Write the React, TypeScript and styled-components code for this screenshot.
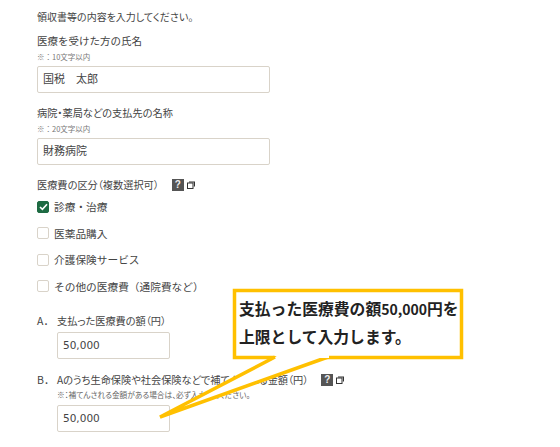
import React from "react";
import styled, { createGlobalStyle } from "styled-components";

const Global = createGlobalStyle`
  html, body { margin: 0; padding: 0; background: #fff; }
  body { font-family: "Noto Sans CJK JP", "Noto Sans", sans-serif; color: #444; overflow: hidden; }
`;

const Page = styled.div`
  position: relative;
  width: 560px;
  height: 447px;
  overflow: hidden;
  box-sizing: border-box;
  padding: 9px 0 0 37px;
`;

const Lead = styled.p`
  margin: 0 0 8px;
  font-size: 10px;
  line-height: 16px;
  font-feature-settings: "palt";
`;

const Field = styled.div`
  margin-bottom: 12px;
`;

const Label = styled.div`
  font-size: 10.2px;
  line-height: 16px;
  display: flex;
  align-items: center;
  font-feature-settings: "palt";
`;

const FieldLabel = styled(Label)<{ $plain?: boolean }>`
  font-size: ${(p) => (p.$plain ? 10.5 : 10.2)}px;
  font-feature-settings: ${(p) => (p.$plain ? "normal" : '"palt"')};
`;

const Note = styled.div`
  font-size: 7.5px;
  line-height: 12px;
  color: #777;
  margin: 2px 0 3px;
`;

const TextInput = styled.div<{ $wide?: boolean }>`
  box-sizing: border-box;
  width: ${(p) => (p.$wide ? 233 : 113)}px;
  height: 27px;
  border: 1px solid #d9d3c9;
  border-radius: 2px;
  padding: 0 5px;
  font-family: "DejaVu Sans", "Noto Sans CJK JP", sans-serif;
  font-size: ${(p) => (p.$wide ? 11 : 10.5)}px;
  line-height: 25px;
  color: #444;
  background: #fff;
`;

const Help = styled.span`
  display: inline-flex;
  align-items: center;
  gap: 3px;
  margin-left: 13px;
`;

const HelpBox = styled.span`
  width: 12px;
  height: 12px;
  background: #555;
  color: #eee;
  font: bold 10px/12px "Liberation Sans", sans-serif;
  text-align: center;
`;

const CheckList = styled.div`
  margin-top: 5px;
  margin-bottom: 18px;
  display: flex;
  flex-direction: column;
  gap: 9.5px;
`;

const CheckRow = styled.div`
  display: flex;
  align-items: center;
  gap: 5px;
  font-size: 10.7px;
  line-height: 17px;
`;

const Box = styled.span<{ $on?: boolean }>`
  box-sizing: border-box;
  width: 12px;
  height: 12px;
  border-radius: 2px;
  border: 1px solid ${(p) => (p.$on ? "#1e6b43" : "#d9d3c9")};
  background: ${(p) => (p.$on ? "#1e6b43" : "#fff")};
  display: flex;
  align-items: center;
  justify-content: center;
`;

const Amount = styled.div`
  display: grid;
  grid-template-columns: 20px 1fr;
  margin-bottom: 13px;
`;

const Mark = styled.span`
  font-size: 10.5px;
  line-height: 16px;
`;

const AmountBody = styled.div``;

const AmountLabel = styled(Label)`
  margin-bottom: 3px;
`;

const AmountNote = styled(Note)`
  color: #666;
  font-size: 7.7px;
  margin: 1px 0 4px;
  font-feature-settings: "palt";
`;

const Callout = styled.div`
  position: absolute;
  left: 233px;
  top: 289px;
  width: 229px;
  height: 69px;
  box-sizing: border-box;
  padding: 6px 0 0 6px;
  font-size: 15.8px;
  font-weight: 700;
  line-height: 27px;
  color: #222;
  white-space: nowrap;
`;

const CalloutText = styled.div`
  position: relative;
`;

const Digits = styled.span`
  font-size: 14px;
`;

const Tail = styled.svg`
  position: absolute;
  left: -80px;
  top: 0;
  overflow: visible;
`;

const HelpIcon = () => (
  <Help>
    <HelpBox>?</HelpBox>
    <svg width="8" height="8" viewBox="0 0 8 8" fill="none" stroke="#333">
      <rect x="0.5" y="2" width="5.5" height="5.5" strokeWidth="1" />
      <path d="M2 1h5.5v4.5" strokeWidth="1.2" />
    </svg>
  </Help>
);

export default function App() {
  return (
    <Page>
      <Global />
      <Lead>領収書等の内容を入力してください。</Lead>
      <Field>
        <FieldLabel $plain>医療を受けた方の氏名</FieldLabel>
        <Note>※：10文字以内</Note>
        <TextInput $wide>国税　太郎</TextInput>
      </Field>
      <Field>
        <FieldLabel>病院・薬局などの支払先の名称</FieldLabel>
        <Note>※：20文字以内</Note>
        <TextInput $wide>財務病院</TextInput>
      </Field>
      <Label>
        医療費の区分（複数選択可）
        <HelpIcon />
      </Label>
      <CheckList>
        <CheckRow>
          <Box $on>
            <svg width="9" height="8" viewBox="0 0 9 8" fill="none">
              <path d="M1 4l2.4 2.4L8 1.2" stroke="#fff" strokeWidth="1.6" />
            </svg>
          </Box>
          診療・治療
        </CheckRow>
        <CheckRow>
          <Box />
          医薬品購入
        </CheckRow>
        <CheckRow>
          <Box />
          介護保険サービス
        </CheckRow>
        <CheckRow>
          <Box />
          その他の医療費（通院費など）
        </CheckRow>
      </CheckList>
      <Amount>
        <Mark>A．</Mark>
        <AmountBody>
          <AmountLabel>支払った医療費の額（円）</AmountLabel>
          <TextInput>50,000</TextInput>
        </AmountBody>
      </Amount>
      <Amount>
        <Mark>B．</Mark>
        <AmountBody>
          <Label>
            Aのうち生命保険や社会保険などで補てんされる金額（円）
            <HelpIcon />
          </Label>
          <AmountNote>※：補てんされる金額がある場合は、必ず入力してください。</AmountNote>
          <TextInput>50,000</TextInput>
        </AmountBody>
      </Amount>
      <Callout>
        <Tail width="310" height="140" viewBox="0 0 310 140">
          <rect x="81.5" y="1.5" width="227" height="67" fill="#fff" stroke="#ffc000" strokeWidth="3.5" />
          <path d="M122 68 L7 128 L175 68" fill="#fff" stroke="#ffc000" strokeWidth="3.5" strokeLinejoin="miter" />
          <path d="M121 66 H176 V69 L125 69 Z" fill="#fff" />
        </Tail>
        <CalloutText>
          支払った医療費の額<Digits>50,000</Digits>円を
          <br />
          上限として入力します。
        </CalloutText>
      </Callout>
    </Page>
  );
}
